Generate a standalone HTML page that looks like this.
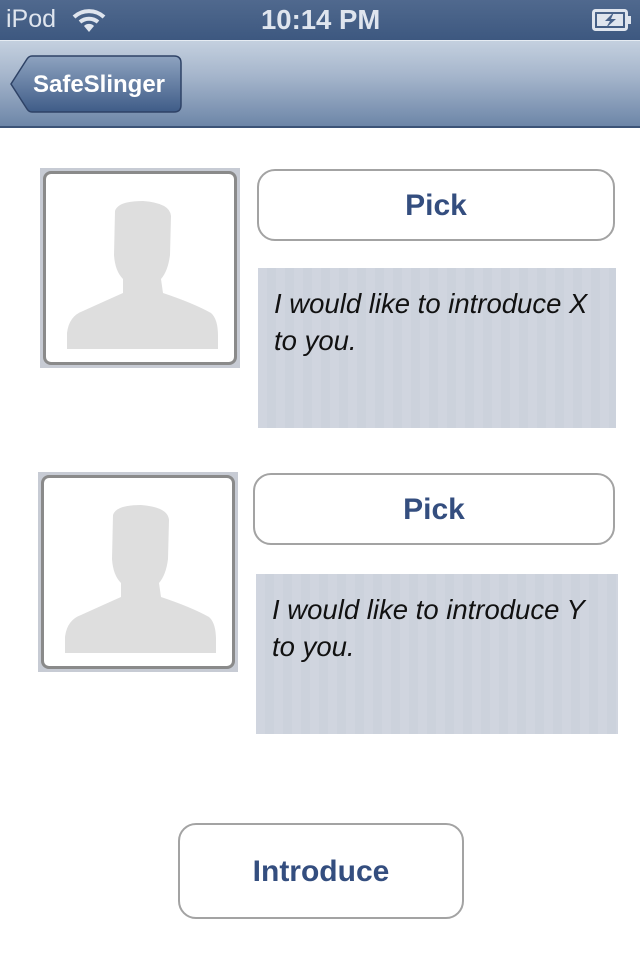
<!DOCTYPE html>
<html><head><style>
*{margin:0;padding:0;box-sizing:border-box}
body{width:640px;height:960px;background:#fff;font-family:"Liberation Sans",sans-serif;position:relative;overflow:hidden}
.status{position:absolute;top:0;left:0;width:640px;height:40px;background:linear-gradient(#50698e,#3d5880);color:#dfe5ee;font-weight:bold;font-size:25px}
.nav{position:absolute;top:40px;left:0;width:640px;height:88px;background:linear-gradient(#c4d0df,#a6b6cc 40%,#6d86a8 100%);border-top:1px solid #e6ecf3;border-bottom:2px solid #3c5377}
.back{position:absolute;left:10px;top:14px;width:172px;height:58px}
.photo{position:absolute;width:200px;height:200px;background:#c7cbd4;padding:3px}
.photo .in{width:100%;height:100%;background:#fff;border:3px solid #8a8a8a;border-radius:8px;position:relative;overflow:hidden}
.btn{position:absolute;border:2px solid #a3a3a3;border-radius:18px;background:#fff;color:#344e7f;font-weight:bold;font-size:30px;text-align:center}
.note{position:absolute;background:repeating-linear-gradient(90deg,#d0d5df 0 9px,#ccd2dc 9px 18px);font-style:italic;font-size:27.5px;color:#111;padding:17px 8px 0 16px;line-height:37px}
</style></head><body>
<div class="status">
<span style="position:absolute;left:6px;top:5px;font-weight:normal">iPod</span>
<svg style="position:absolute;left:72px;top:8px" width="34" height="24" viewBox="0 0 34 24"><path d="M2 9 A22 22 0 0 1 32 9" stroke="#dfe5ee" stroke-width="4" fill="none"/><path d="M8 14 A14 14 0 0 1 26 14" stroke="#dfe5ee" stroke-width="4" fill="none"/><path d="M17 24 L12 18 A7 7 0 0 1 22 18 Z" fill="#dfe5ee"/></svg>
<span style="position:absolute;left:261px;top:4px;font-size:27.5px">10:14 PM</span>
<svg style="position:absolute;left:592px;top:9px" width="40" height="22" viewBox="0 0 40 22"><rect x="1.5" y="1.5" width="33" height="19" rx="2" fill="none" stroke="#dfe5ee" stroke-width="3"/><rect x="35" y="7" width="4" height="8" fill="#dfe5ee"/><rect x="5" y="5" width="26" height="12" fill="#dfe5ee"/><path d="M22 3 L13 12 L18 12 L14 19 L24 10 L19 10 Z" fill="#48628a"/></svg>
</div>
<div class="nav">
<svg class="back" viewBox="0 0 172 58"><defs><linearGradient id="g" x1="0" y1="0" x2="0" y2="1"><stop offset="0" stop-color="#8ea3c0"/><stop offset="1" stop-color="#3f5c88"/></linearGradient></defs><path d="M22 1 H164 Q171 1 171 8 V50 Q171 57 164 57 H22 Q19 57 17 54 L1 29 L17 4 Q19 1 22 1 Z" fill="url(#g)" stroke="#2e4266" stroke-width="1.5"/><text x="89" y="37" text-anchor="middle" font-family="Liberation Sans" font-weight="bold" font-size="24" fill="#fff">SafeSlinger</text></svg>
</div>

<div class="photo" style="left:40px;top:168px"><div class="in"><svg width="194" height="194" viewBox="0 0 194 194" style="position:absolute;left:-3px;top:-3px"><path d="M72 40 Q75 30 100 30 Q127 32 128 45 L127 84 Q125 100 118 108 L120 122 Q150 132 168 142 Q175 148 175 165 V178 H24 V162 Q26 145 40 140 Q62 130 80 122 L80 108 Q72 100 71 84 Z" fill="#dedede"/></svg></div></div>
<div class="btn" style="left:257px;top:169px;width:358px;height:72px;line-height:70px">Pick</div>
<div class="note" style="left:258px;top:268px;width:358px;height:160px">I would like to introduce X to you.</div>

<div class="photo" style="left:38px;top:472px"><div class="in"><svg width="194" height="194" viewBox="0 0 194 194" style="position:absolute;left:-3px;top:-3px"><path d="M72 40 Q75 30 100 30 Q127 32 128 45 L127 84 Q125 100 118 108 L120 122 Q150 132 168 142 Q175 148 175 165 V178 H24 V162 Q26 145 40 140 Q62 130 80 122 L80 108 Q72 100 71 84 Z" fill="#dedede"/></svg></div></div>
<div class="btn" style="left:253px;top:473px;width:362px;height:72px;line-height:70px">Pick</div>
<div class="note" style="left:256px;top:574px;width:362px;height:160px">I would like to introduce Y to you.</div>

<div class="btn" style="left:178px;top:823px;width:286px;height:96px;line-height:94px">Introduce</div>
</body></html>
